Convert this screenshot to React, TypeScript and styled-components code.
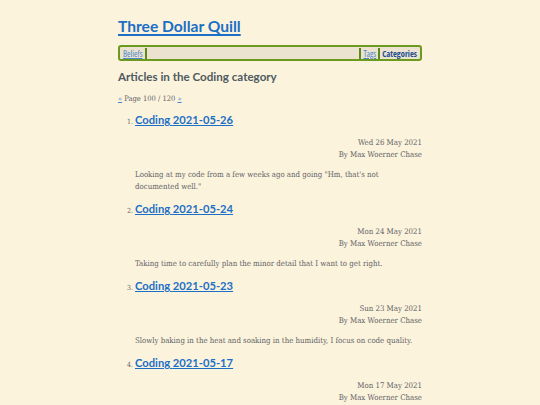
import React from "react";
import styled, { createGlobalStyle } from "styled-components";

const Global = createGlobalStyle`
  html, body { margin: 0; padding: 0; background: #fcf3dc; }
  body { font-family: "DejaVu Serif Condensed", "DejaVu Serif", serif; font-stretch: semi-condensed; color: #555; }
`;

const Page = styled.div`
  width: 304px;
  margin: 0 auto;
  padding-top: 14px;
`;

const SiteTitle = styled.h1`
  margin: 0;
  font-family: Lato, sans-serif;
  font-weight: 700;
  font-size: 15.6px;
  line-height: 24px;
  a { color: #1b6fc6; text-decoration: underline; text-decoration-thickness: 2px; text-underline-offset: 1.5px; }
`;

const Nav = styled.nav`
  margin-top: 7px;
  display: flex;
  align-items: center;
  border: 2px solid #6b9a1f;
  border-radius: 3px;
  background: #ebe3cf;
  height: 12px;
  padding: 0 1px;
  font-family: "Open Sans", sans-serif;
  font-size: 8.5px;
`;

const NavLink = styled.a<{ $active?: boolean }>`
  color: ${p => (p.$active ? "#1d4f8f" : "#4a86c8")};
  font-weight: ${p => (p.$active ? 700 : 400)};
  text-decoration: ${p => (p.$active ? "none" : "underline")};
  padding: 0 2px;
`;

const Sep = styled.span`
  width: 2px;
  height: 11px;
  background: #5a8a17;
`;

const Spacer = styled.div`
  flex: 1;
`;

const Heading = styled.h2`
  margin: 7px 0 0;
  font-family: Lato, sans-serif;
  font-weight: 700;
  font-size: 11.6px;
  line-height: 18px;
  color: #4f5a61;
`;

const Pager = styled.div`
  margin-top: 8px;
  font-size: 7.5px;
  line-height: 10px;
  color: #5f6468;
  a { color: #4a86c8; }
`;

const List = styled.ol`
  margin: 6px 0 0;
  padding-left: 17px;
  font-size: 7px;
  li::marker { color: #666; }
`;

const Item = styled.li``;

const ItemTitle = styled.h3`
  margin: 0;
  display: inline;
  font-family: Lato, sans-serif;
  font-weight: 700;
  font-size: 11.2px;
  line-height: 20px;
  a { color: #1b6fc6; text-decoration: underline; text-decoration-thickness: 1.2px; text-underline-offset: 1px; }
`;

const Meta = styled.div`
  margin-top: 7px;
  text-align: right;
  font-size: 7.8px;
  line-height: 12px;
  color: #5f6468;
`;

const Summary = styled.p`
  margin: 8px 0 6px;
  font-size: 7.8px;
  line-height: 12px;
  color: #5f6468;
`;

const items = [
  { d: "2021-05-26", date: "Wed 26 May 2021", s: "Looking at my code from a few weeks ago and going \"Hm, that's not documented well.\"" },
  { d: "2021-05-24", date: "Mon 24 May 2021", s: "Taking time to carefully plan the minor detail that I want to get right." },
  { d: "2021-05-23", date: "Sun 23 May 2021", s: "Slowly baking in the heat and soaking in the humidity, I focus on code quality." },
  { d: "2021-05-17", date: "Mon 17 May 2021", s: "Getting back into the swing of things." },
];

export default function App() {
  return (
    <>
      <Global />
      <Page>
        <SiteTitle><a href="#">Three Dollar Quill</a></SiteTitle>
        <Nav>
          <NavLink href="#">Beliefs</NavLink>
          <Sep />
          <Spacer />
          <Sep />
          <NavLink href="#">Tags</NavLink>
          <Sep />
          <NavLink $active>Categories</NavLink>
        </Nav>
        <Heading>Articles in the Coding category</Heading>
        <Pager><a href="#">«</a> Page 100 / 120 <a href="#">»</a></Pager>
        <List>
          {items.map(it => (
            <Item key={it.d}>
              <ItemTitle><a href="#">Coding {it.d}</a></ItemTitle>
              <Meta>{it.date}<br />By Max Woerner Chase</Meta>
              <Summary>{it.s}</Summary>
            </Item>
          ))}
        </List>
      </Page>
    </>
  );
}
